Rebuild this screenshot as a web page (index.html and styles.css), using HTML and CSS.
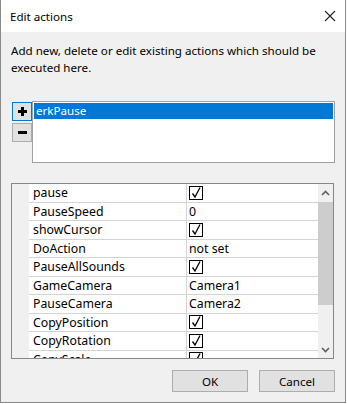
FILE: index.html
```html
<!DOCTYPE html>
<html>
<head>
  <title>Edit actions</title>
  <link rel="stylesheet" href="styles.css">
</head>
<body>
  <div class="window">
    <div class="titlebar">
      <span class="title">Edit actions</span>
      <span class="close">
        <svg width="12" height="12" viewBox="0 0 12 12"><path d="M1 1 L11 11 M11 1 L1 11" stroke="#222" stroke-width="1.1" fill="none"/></svg>
      </span>
    </div>

    <div class="content">
      <p class="intro">Add new, delete or edit existing actions which should be executed here.</p>

      <div class="list-row">
        <div class="list-buttons">
          <button class="icon-btn focused"><span class="plus"></span></button>
          <button class="icon-btn"><span class="minus"></span></button>
        </div>
        <div class="listbox">
          <div class="list-item selected">erkPause</div>
        </div>
      </div>

      <div class="grid">
        <div class="gutter"></div>
        <div class="rows">
          <div class="row"><div class="name">pause</div><div class="value"><span class="check"></span></div></div>
          <div class="row"><div class="name">PauseSpeed</div><div class="value">0</div></div>
          <div class="row"><div class="name">showCursor</div><div class="value"><span class="check"></span></div></div>
          <div class="row"><div class="name">DoAction</div><div class="value">not set</div></div>
          <div class="row"><div class="name">PauseAllSounds</div><div class="value"><span class="check"></span></div></div>
          <div class="row"><div class="name">GameCamera</div><div class="value">Camera1</div></div>
          <div class="row"><div class="name">PauseCamera</div><div class="value">Camera2</div></div>
          <div class="row"><div class="name">CopyPosition</div><div class="value"><span class="check"></span></div></div>
          <div class="row"><div class="name">CopyRotation</div><div class="value"><span class="check"></span></div></div>
          <div class="row"><div class="name">CopyScale</div><div class="value"><span class="check"></span></div></div>
        </div>
        <div class="scrollbar">
          <div class="arrow">
            <svg width="9" height="6" viewBox="0 0 9 6"><path d="M1 5 L4.5 1.5 L8 5" stroke="#606060" stroke-width="1.6" fill="none"/></svg>
          </div>
          <div class="track"><div class="thumb"></div></div>
          <div class="arrow">
            <svg width="9" height="6" viewBox="0 0 9 6"><path d="M1 1 L4.5 4.5 L8 1" stroke="#606060" stroke-width="1.6" fill="none"/></svg>
          </div>
        </div>
      </div>

      <div class="footer">
        <button class="btn">OK</button>
        <button class="btn">Cancel</button>
      </div>
    </div>
  </div>
</body>
</html>
```

FILE: styles.css
```css
body {
  margin: 0;
  background: #fff;
  font-family: "Noto Sans", "Open Sans", sans-serif;
  font-size: 11.6px;
  color: #000;
}

.window {
  width: 346px;
  height: 403px;
  box-sizing: border-box;
  border-left: 1px solid #8a8a8a;
  border-right: 1px solid #8a8a8a;
  border-bottom: 1px solid #8a8a8a;
  display: flex;
  flex-direction: column;
}

.titlebar {
  height: 32px;
  background: #fff;
  display: flex;
  align-items: center;
  justify-content: space-between;
  padding-left: 9px;
}

.close {
  width: 30px;
  display: flex;
  justify-content: center;
}

.content {
  flex: 1;
  background: #f0f0f0;
  padding: 10px 0 0 10px;
}

.intro {
  margin: 0;
  line-height: 17px;
  width: 320px;
}

.list-row {
  display: flex;
  margin-top: 25px;
  padding-left: 1px;
}

.list-buttons {
  display: flex;
  flex-direction: column;
  gap: 2px;
  padding-top: 1px;
}

.icon-btn {
  width: 20px;
  height: 19px;
  padding: 0;
  background: #e1e1e1;
  border: 1px solid #adadad;
  display: flex;
  align-items: center;
  justify-content: center;
}

.icon-btn.focused {
  border-color: #0078d7;
}

.plus {
  position: relative;
  width: 9px;
  height: 9px;
}

.plus::before,
.plus::after {
  content: "";
  position: absolute;
  background: #000;
}

.plus::before {
  left: 0;
  top: 3px;
  width: 9px;
  height: 3px;
}

.plus::after {
  left: 3px;
  top: 0;
  width: 3px;
  height: 9px;
}

.minus {
  width: 9px;
  height: 3px;
  background: #000;
}

.listbox {
  width: 303px;
  height: 62px;
  box-sizing: border-box;
  border: 1px solid #a0a0a0;
  background: #fff;
  padding: 1px;
}

.list-item {
  height: 16px;
  line-height: 16px;
  padding-left: 2px;
}

.list-item.selected {
  background: #0078d7;
  color: #fff;
}

.grid {
  margin-top: 20px;
  width: 323px;
  height: 176px;
  box-sizing: border-box;
  border: 1px solid #828790;
  background: #fff;
  display: flex;
  font-size: 12.3px;
}

.gutter {
  width: 17px;
  background: #f0f0f0;
}

.rows {
  flex: 1;
  overflow: hidden;
}

.row {
  display: flex;
  height: 18.5px;
  box-sizing: border-box;
  border-bottom: 1px solid #d4d4d4;
}

.name {
  width: 158px;
  padding-left: 4px;
  box-sizing: border-box;
  border-right: 1px solid #d4d4d4;
  line-height: 17px;
}

.value {
  flex: 1;
  padding-left: 2px;
  line-height: 17px;
  display: flex;
  align-items: center;
}

.check {
  width: 14px;
  height: 14px;
  box-sizing: border-box;
  border: 1px solid #000;
  background: #fff url("data:image/svg+xml;utf8,<svg xmlns='http://www.w3.org/2000/svg' width='12' height='12' viewBox='0 0 12 12'><path d='M2.5 6.5 L5 10 L10 0.5' stroke='black' stroke-width='1.3' fill='none'/></svg>") no-repeat center;
}

.scrollbar {
  width: 15px;
  background: #f0f0f0;
  display: flex;
  flex-direction: column;
}

.arrow {
  height: 17px;
  display: flex;
  align-items: center;
  justify-content: center;
}

.track {
  flex: 1;
}

.thumb {
  margin: 1px 0 0 0;
  height: 103px;
  background: #cdcdcd;
}

.footer {
  display: flex;
  justify-content: flex-end;
  gap: 11px;
  margin-top: 11px;
  padding-right: 10px;
}

.btn {
  width: 76px;
  height: 22px;
  padding: 0;
  background: #e1e1e1;
  border: 1px solid #adadad;
  font-family: "Noto Sans", "Open Sans", sans-serif;
  font-size: 11.6px;
  color: #000;
}
```
